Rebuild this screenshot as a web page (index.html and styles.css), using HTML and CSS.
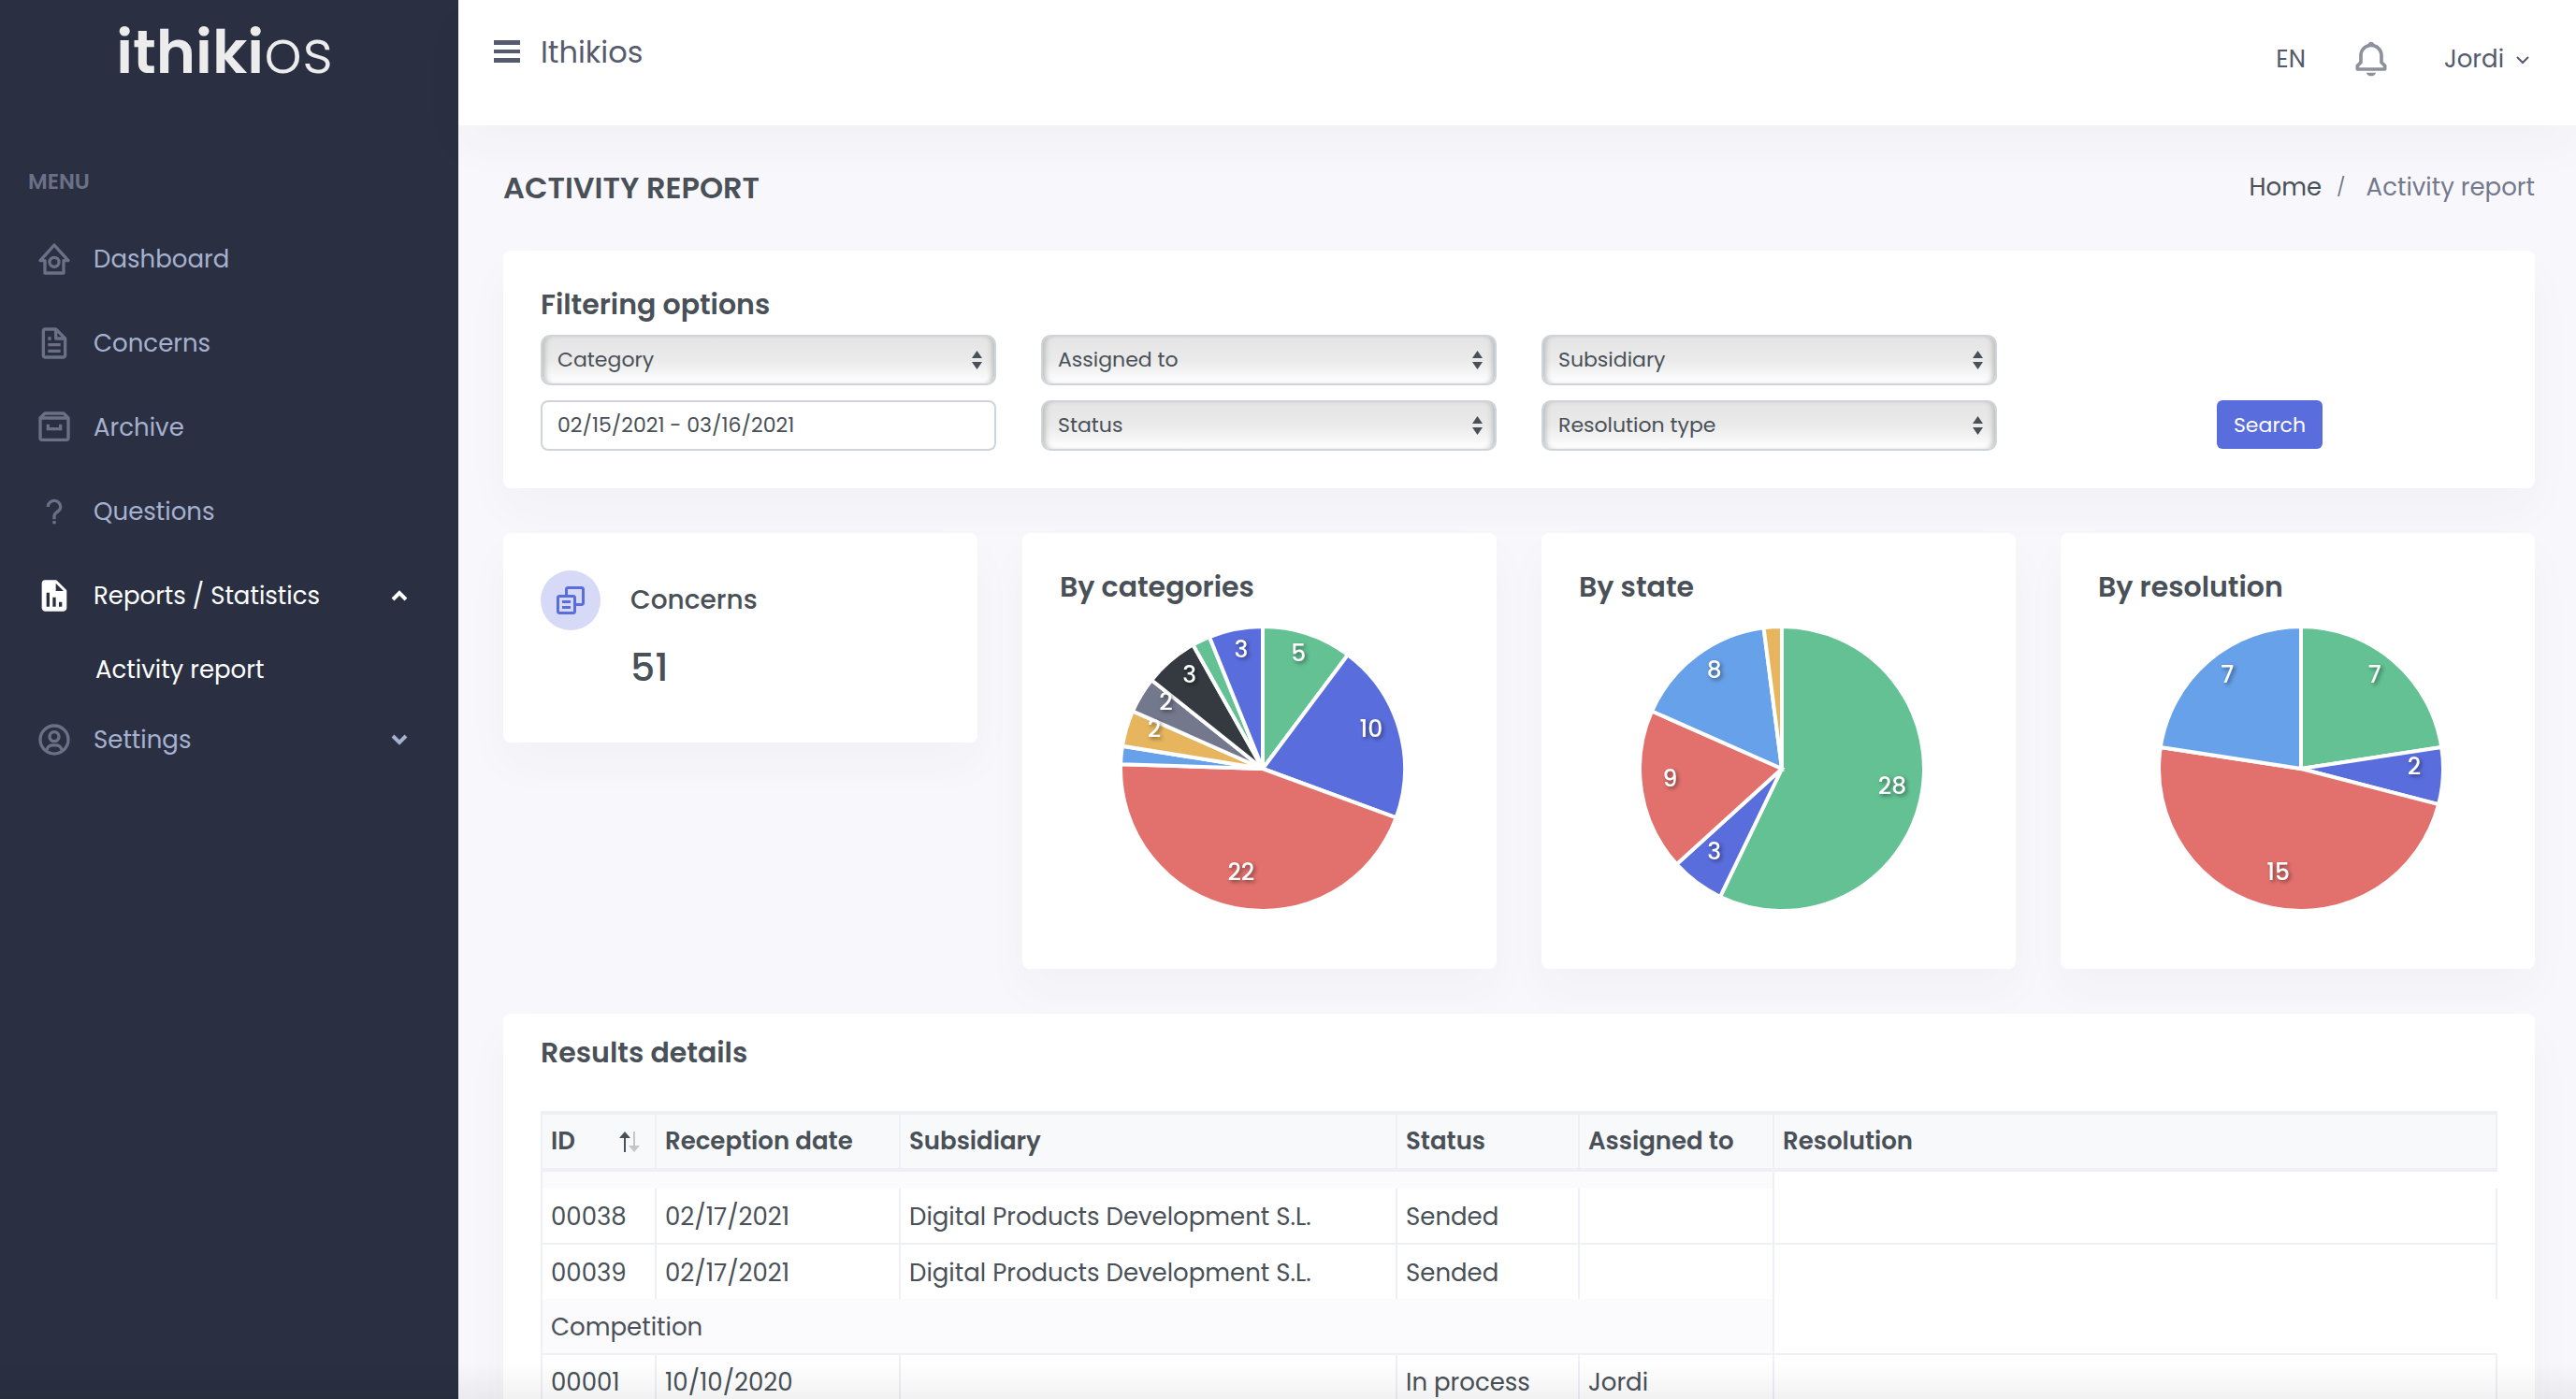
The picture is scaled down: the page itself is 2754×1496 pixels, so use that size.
FILE: index.html
```html
<!DOCTYPE html>
<html lang="en">
<head>
    <meta charset="utf-8">
    <title>Activity report | Ithikios</title>
    <link rel="stylesheet" href="styles.css">
</head>
<body>
<div class="layout">
    <aside class="sidebar">
        <a href="#" class="logo"><b>ithiki</b>os</a>
        <p class="menu-title">Menu</p>
        <nav class="menu">
            <a href="#" class="menu-item">
                <svg class="menu-icon" viewBox="0 0 24 24"><path d="M12 10a4 4 0 1 0 0 8 4 4 0 0 0 0-8zm0 6a2 2 0 1 1 0-4 2 2 0 0 1 0 4z"/><path d="m21.743 12.331-9-10c-.379-.422-1.107-.422-1.486 0l-9 10a.998.998 0 0 0-.17 1.076c.16.361.518.593.913.593h2v7a1 1 0 0 0 1 1h12a1 1 0 0 0 1-1v-7h2a.998.998 0 0 0 .743-1.669zM18 12a1 1 0 0 0-1 1v7H7v-7a1 1 0 0 0-1-1h-.754L12 4.495 18.754 12H18z"/></svg>
                <span>Dashboard</span>
            </a>
            <a href="#" class="menu-item">
                <svg class="menu-icon" viewBox="0 0 24 24"><path d="M19.903 8.586a.997.997 0 0 0-.196-.293l-6-6A.997.997 0 0 0 13 2H6c-1.103 0-2 .897-2 2v16c0 1.103.897 2 2 2h12c1.103 0 2-.897 2-2V9a.952.952 0 0 0-.097-.414zM16.586 8H14V5.414L16.586 8zM6 20V4h6v5a1 1 0 0 0 1 1h5l.002 10H6z"/><path d="M8 12h8v2H8zm0 4h8v2H8zm0-8h2v2H8z"/></svg>
                <span>Concerns</span>
            </a>
            <a href="#" class="menu-item">
                <svg class="menu-icon" viewBox="0 0 24 24"><path d="m21.706 5.292-2.999-2.999A.996.996 0 0 0 18 2H6a.996.996 0 0 0-.707.293L2.294 5.292A.994.994 0 0 0 2 6v13c0 1.103.897 2 2 2h16c1.103 0 2-.897 2-2V6a.994.994 0 0 0-.294-.708zM6.414 4h11.172l1 1H5.414l1-1zM4 19V7h16l.002 12H4z"/><path d="M7 14h10v-4h-2v2H9v-2H7z"/></svg>
                <span>Archive</span>
            </a>
            <a href="#" class="menu-item">
                <svg class="menu-icon" viewBox="0 0 24 24"><path d="M12 4C9.243 4 7 6.243 7 9h2c0-1.654 1.346-3 3-3s3 1.346 3 3c0 1.069-.454 1.465-1.481 2.255-.382.294-.813.626-1.226 1.038C10.981 13.604 10.995 14.897 11 15v2h2v-2.009c0-.024.023-.601.707-1.284.32-.32.682-.598 1.031-.867C15.798 12.024 17 11.1 17 9c0-2.757-2.243-5-5-5zm-1 14h2v2h-2z"/></svg>
                <span>Questions</span>
            </a>
            <a href="#" class="menu-item active">
                <svg class="menu-icon" viewBox="0 0 24 24"><path fill-rule="evenodd" d="m19.707 8.293-6-6A.997.997 0 0 0 13 2H6c-1.103 0-2 .897-2 2v16c0 1.103.897 2 2 2h12c1.103 0 2-.897 2-2V9a.997.997 0 0 0-.293-.707zM9 19H7v-9h2v9zm4 0h-2v-6h2v6zm4 0h-2v-3h2v3zM13 9V4l5 5h-5z"/></svg>
                <span>Reports / Statistics</span>
                <svg class="menu-arrow" viewBox="0 0 18 12"><path d="M2 10l7-7 7 7"/></svg>
            </a>
            <a href="#" class="menu-item submenu-item">Activity report</a>
            <a href="#" class="menu-item">
                <svg class="menu-icon" viewBox="0 0 24 24"><path d="M12 2A10.13 10.13 0 0 0 2 12a10 10 0 0 0 4 7.92V20h.1a9.7 9.7 0 0 0 11.8 0h.1v-.08A10 10 0 0 0 22 12 10.13 10.13 0 0 0 12 2zM8.07 18.93A3 3 0 0 1 11 16.57h2a3 3 0 0 1 2.93 2.36 7.75 7.75 0 0 1-7.86 0zm9.54-1.29A5 5 0 0 0 13 14.57h-2a5 5 0 0 0-4.61 3.07A8 8 0 0 1 4 12a8.1 8.1 0 0 1 8-8 8.1 8.1 0 0 1 8 8 8 8 0 0 1-2.39 5.64z"/><path d="M12 6a3.91 3.91 0 0 0-4 4 3.91 3.91 0 0 0 4 4 3.91 3.91 0 0 0 4-4 3.91 3.91 0 0 0-4-4zm0 6a1.91 1.91 0 0 1-2-2 1.91 1.91 0 0 1 2-2 1.91 1.91 0 0 1 2 2 1.91 1.91 0 0 1-2 2z"/></svg>
                <span>Settings</span>
                <svg class="menu-arrow" viewBox="0 0 18 12"><path d="M2 2l7 7 7-7"/></svg>
            </a>
        </nav>
    </aside>

    <div class="main">
        <header class="topbar">
            <div class="topbar-left">
                <button type="button" class="icon-button" aria-label="Toggle menu">
                    <svg class="burger" viewBox="0 0 28 24"><path d="M0 0h28v5H0zM0 10h28v4H0zM0 19h28v5H0z"/></svg>
                </button>
                <span class="site-name">Ithikios</span>
            </div>
            <div class="topbar-right">
                <button type="button" class="text-button">EN</button>
                <button type="button" class="icon-button" aria-label="Notifications">
                    <svg class="bell" viewBox="0 0 24 24"><path d="M19 13.586V10c0-3.217-2.185-5.927-5.145-6.742C13.562 2.52 12.846 2 12 2s-1.562.52-1.855 1.258C7.185 4.074 5 6.783 5 10v3.586l-1.707 1.707A.996.996 0 0 0 3 16v2a1 1 0 0 0 1 1h16a1 1 0 0 0 1-1v-2a.996.996 0 0 0-.293-.707L19 13.586zM19 17H5v-.586l1.707-1.707A.996.996 0 0 0 7 14v-4c0-2.757 2.243-5 5-5s5 2.243 5 5v4c0 .266.105.52.293.707L19 16.414V17zm-7 5a2.98 2.98 0 0 0 2.818-2H9.182A2.98 2.98 0 0 0 12 22z"/></svg>
                </button>
                <button type="button" class="text-button user-button">Jordi <svg class="user-arrow" viewBox="0 0 14 9"><path d="M1 1l6 6 6-6"/></svg></button>
            </div>
        </header>

        <main class="content">
            <div class="page-title">
                <h1>Activity report</h1>
                <nav class="breadcrumb">
                    <a href="#">Home</a>
                    <span class="separator">/</span>
                    <span>Activity report</span>
                </nav>
            </div>

            <section class="card filters">
                <h2>Filtering options</h2>
                <form class="filter-grid" onsubmit="return false;">
                    <select class="field" aria-label="Category"><option>Category</option></select>
                    <select class="field" aria-label="Assigned to"><option>Assigned to</option></select>
                    <select class="field" aria-label="Subsidiary"><option>Subsidiary</option></select>
                    <span></span>
                    <input class="field" type="text" aria-label="Date range" value="02/15/2021 - 03/16/2021">
                    <select class="field" aria-label="Status"><option>Status</option></select>
                    <select class="field" aria-label="Resolution type"><option>Resolution type</option></select>
                    <button type="submit" class="search-button">Search</button>
                </form>
            </section>

            <div class="stats">
                <section class="card total">
                    <span class="total-icon">
                        <svg viewBox="0 0 24 24"><path d="M20 2H10c-1.103 0-2 .897-2 2v4H4c-1.103 0-2 .897-2 2v10c0 1.103.897 2 2 2h10c1.103 0 2-.897 2-2v-4h4c1.103 0 2-.897 2-2V4c0-1.103-.897-2-2-2zM4 20V10h10l.002 10H4zm16-6h-4v-4c0-1.103-.897-2-2-2h-4V4h10v10z"/><path d="M6 12h6v2H6zm0 4h6v2H6z"/></svg>
                    </span>
                    <div>
                        <h3>Concerns</h3>
                        <p class="total-value">51</p>
                    </div>
                </section>
                <section class="card chart">
                    <h2>By categories</h2>
                    <svg class="pie" id="pie-categories" viewBox="0 0 427 336"></svg>
                </section>
                <section class="card chart">
                    <h2>By state</h2>
                    <svg class="pie" id="pie-state" viewBox="0 0 427 336"></svg>
                </section>
                <section class="card chart">
                    <h2>By resolution</h2>
                    <svg class="pie" id="pie-resolution" viewBox="0 0 427 336"></svg>
                </section>
            </div>

            <section class="card results">
                <h2>Results details</h2>
                <table>
                    <colgroup>
                        <col class="col-id">
                        <col class="col-date">
                        <col class="col-subsidiary">
                        <col class="col-status">
                        <col class="col-assigned">
                        <col>
                    </colgroup>
                    <thead>
                    <tr>
                        <th>
                            <div class="sortable">ID
                                <svg class="sort" viewBox="0 0 22 22"><path class="up" d="M5 22V7H0l6-7 6 7H7v15z"/><path class="down" d="M15 0h2v15h5l-6 7-6-7h5z"/></svg>
                            </div>
                        </th>
                        <th>Reception date</th>
                        <th>Subsidiary</th>
                        <th>Status</th>
                        <th>Assigned to</th>
                        <th>Resolution</th>
                    </tr>
                    </thead>
                    <tbody>
                    <tr class="group empty"><td colspan="5"></td></tr>
                    <tr>
                        <td>00038</td>
                        <td>02/17/2021</td>
                        <td>Digital Products Development S.L.</td>
                        <td>Sended</td>
                        <td></td>
                        <td></td>
                    </tr>
                    <tr>
                        <td>00039</td>
                        <td>02/17/2021</td>
                        <td>Digital Products Development S.L.</td>
                        <td>Sended</td>
                        <td></td>
                        <td></td>
                    </tr>
                    <tr class="group"><td colspan="5">Competition</td></tr>
                    <tr>
                        <td>00001</td>
                        <td>10/10/2020</td>
                        <td></td>
                        <td>In process</td>
                        <td>Jordi</td>
                        <td></td>
                    </tr>
                    </tbody>
                </table>
            </section>
        </main>
    </div>
</div>
<div class="bottom-shade"></div>

<script src="charts.js"></script>
</body>
</html>
```
FILE: styles.css
```css
* {
    box-sizing: border-box;
}

body {
    margin: 0;
    font-family: Poppins, Inter, "Noto Sans", sans-serif;
    font-size: 26px;
    line-height: 39px;
    color: #495057;
    background-color: #f8f8fc;
}

h1, h2, h3, p {
    margin: 0;
}

a {
    color: inherit;
    text-decoration: none;
}

button, input, select {
    font-family: inherit;
    color: inherit;
}

button {
    padding: 0;
    border: none;
    background: none;
    cursor: pointer;
}

.layout {
    display: flex;
    height: 100vh;
    overflow: hidden;
}

/* Sidebar */
.sidebar {
    width: 490px;
    flex-shrink: 0;
    background-color: #2a3042;
}

.logo {
    display: block;
    height: 134px;
    padding: 16px 10px 0 0;
    text-align: center;
    font-size: 64px;
    font-weight: 300;
    line-height: 80px;
    color: #ececec;
}

.logo b {
    font-weight: 600;
}

.menu-title {
    padding: 41px 30px 18px;
    font-size: 23px;
    font-weight: 600;
    text-transform: uppercase;
    color: #6a7187;
}

.menu-item {
    display: flex;
    align-items: center;
    gap: 22px;
    height: 90px;
    padding: 0 54px 0 38px;
    color: #a6b0cf;
}

.menu-item.active, .submenu-item {
    color: #fff;
}

.submenu-item {
    height: 64px;
    padding: 4px 54px 0 102px;
}

.menu-icon {
    width: 40px;
    height: 40px;
    fill: #6a7187;
}

.active .menu-icon {
    fill: #fff;
}

.menu-arrow {
    width: 18px;
    height: 12px;
    margin-left: auto;
    fill: none;
    stroke: currentColor;
    stroke-width: 4;
}

/* Top bar */
.main {
    flex: 1;
    min-width: 0;
}

.topbar {
    display: flex;
    justify-content: space-between;
    height: 134px;
    padding: 0 50px 0 38px;
    background-color: #fff;
    box-shadow: 0 24px 48px rgba(18, 38, 63, 0.03);
}

.topbar-left {
    display: flex;
    align-items: center;
    gap: 22px;
    height: 110px;
    color: #555b6d;
}

.topbar-right {
    display: flex;
    align-items: center;
    gap: 48px;
    height: 126px;
    color: #555b6d;
}

.icon-button {
    display: flex;
}

.burger {
    width: 28px;
    height: 24px;
    fill: #555b6d;
}

.site-name {
    font-size: 32px;
}

.text-button {
    font-size: 26px;
    line-height: 40px;
}

.user-button {
    padding-left: 8px;
}

.bell {
    width: 44px;
    height: 44px;
    fill: #8e919d;
}

.user-arrow {
    width: 14px;
    height: 9px;
    margin-left: 6px;
    vertical-align: middle;
    fill: none;
    stroke: currentColor;
    stroke-width: 2;
}

/* Content */
.content {
    padding: 46px 44px 48px 48px;
}

.page-title {
    display: flex;
    justify-content: space-between;
    align-items: center;
    height: 40px;
    margin-bottom: 48px;
}

h1 {
    font-size: 32px;
    font-weight: 600;
    text-transform: uppercase;
}

h2 {
    font-size: 30px;
    font-weight: 600;
    line-height: 36px;
}

.breadcrumb {
    display: flex;
    color: #74788d;
}

.breadcrumb a {
    color: #495057;
}

.separator {
    padding: 0 22px 0 16px;
    font-size: 20px;
}

.card {
    padding: 40px;
    border-radius: 8px;
    background-color: #fff;
    box-shadow: 0 24px 48px rgba(18, 38, 63, 0.03);
}

/* Filters */
.filters {
    margin-bottom: 48px;
}

.filter-grid {
    display: grid;
    grid-template-columns: repeat(4, 1fr);
    gap: 16px 48px;
    margin-top: 14px;
}

.field {
    width: 100%;
    height: 54px;
    padding: 0 16px 2px;
    border: 2px solid #ced4da;
    border-radius: 8px;
    font-size: 22px;
    background-color: #fff;
}

select.field {
    appearance: none;
    border-radius: 10px;
    background-image:
        url("data:image/svg+xml,%3Csvg xmlns='http://www.w3.org/2000/svg' viewBox='0 0 11 20'%3E%3Cpath fill='%23495057' d='M0 8l5.500-8L11 8zM0 12h11l-5.500 8z'/%3E%3C/svg%3E"),
        linear-gradient(#e5e5e5, #eaeaea 50%, #fff);
    background-position: right 13px center, center;
    background-size: 11px 20px, 100% 100%;
    background-repeat: no-repeat;
    box-shadow: inset 6px 0 6px -4px #b5b5b5, inset -6px 0 6px -4px #b5b5b5;
}

.search-button {
    justify-self: center;
    height: 52px;
    padding: 0 18px;
    border-radius: 6px;
    font-size: 22px;
    color: #fff;
    background-color: #5a6ddd;
}

/* Totals and charts */
.stats {
    display: grid;
    grid-template-columns: repeat(4, 1fr);
    align-items: start;
    gap: 48px;
    margin-bottom: 48px;
}

.total {
    display: flex;
    gap: 32px;
    height: 224px;
}

.total-icon {
    display: flex;
    align-items: center;
    justify-content: center;
    width: 64px;
    height: 64px;
    border-radius: 50%;
    background-color: #d6daf6;
}

.total-icon svg {
    width: 36px;
    height: 36px;
    fill: #5a6ddd;
}

h3 {
    font-size: 28px;
    font-weight: 500;
    line-height: 64px;
}

.total-value {
    font-size: 41px;
    font-weight: 500;
    line-height: 80px;
}

.chart {
    padding-bottom: 54px;
}

.pie {
    display: block;
    width: 100%;
}

.pie path {
    stroke: #fff;
    stroke-width: 4;
}

.pie text {
    font-size: 25px;
    font-weight: 500;
    text-anchor: middle;
    fill: #fff;
    filter: drop-shadow(2px 2px 2px rgba(0, 0, 0, 0.45));
}

/* Results */
.results {
    padding-top: 24px;
}

table {
    width: 100%;
    margin-top: 44px;
    border-collapse: collapse;
    table-layout: fixed;
}

.col-id {
    width: 122px;
}

.col-date {
    width: 261px;
}

.col-subsidiary {
    width: 531px;
}

.col-status {
    width: 195px;
}

.col-assigned {
    width: 208px;
}

th, td {
    height: 59px;
    padding: 2px 9px 0;
    border: 2px solid #eff0f6;
    text-align: left;
    white-space: nowrap;
}

th {
    height: 61px;
    padding-top: 0;
    border-top-width: 4px;
    border-bottom-width: 4px;
    font-weight: 600;
    background-color: #f8f9fb;
}

.sortable {
    display: flex;
    justify-content: space-between;
    align-items: center;
    padding-right: 7px;
}

.sort {
    width: 22px;
    height: 22px;
}

.sort .up {
    fill: #495057;
}

.sort .down {
    fill: #c4c6c9;
}

.group td {
    border-top: none;
    background-color: #fbfbfd;
}

.empty td {
    height: 20px;
    border-bottom: none;
}

.empty + tr td {
    border-top: none;
}

tr:has(+ .group) td {
    border-bottom: none;
}

/* Shade along the lower edge of the window */
.bottom-shade {
    position: fixed;
    left: 0;
    right: 0;
    bottom: 0;
    height: 40px;
    background: linear-gradient(rgba(0, 0, 0, 0), rgba(0, 0, 0, 0.05));
    pointer-events: none;
}
```
FILE: charts.js
```js
const colors = ['#63c193', '#5a6ddd', '#e2716d', '#67a1e9', '#e7b55d', '#74788d', '#343a40'];

function drawPie(id, values) {
    const svg = document.getElementById(id);
    const total = values.reduce((a, b) => a + b, 0);
    const cx = 217, cy = 176, r = 152, labelRadius = 121;
    let slices = '', labels = '', start = 0;

    const point = (share, radius) => {
        const angle = share * 2 * Math.PI;
        return [cx + radius * Math.sin(angle), cy - radius * Math.cos(angle)];
    };

    values.forEach((value, i) => {
        const end = start + value / total;
        const [x1, y1] = point(start, r);
        const [x2, y2] = point(end, r);
        const large = end - start > 0.5 ? 1 : 0;
        slices += `<path fill="${colors[i % colors.length]}" d="M${cx} ${cy}L${x1} ${y1}A${r} ${r} 0 ${large} 1 ${x2} ${y2}z"/>`;

        // too narrow slices get no label
        if ((end - start) * 360 > 10) {
            const [x, y] = point((start + end) / 2, labelRadius);
            labels += `<text x="${x}" y="${y}">${value}</text>`;
        }
        start = end;
    });

    svg.innerHTML = slices + labels;
}

drawPie('pie-categories', [5, 10, 22, 1, 2, 2, 3, 1, 3]);
drawPie('pie-state', [28, 3, 9, 8, 1]);
drawPie('pie-resolution', [7, 2, 15, 7]);
```
